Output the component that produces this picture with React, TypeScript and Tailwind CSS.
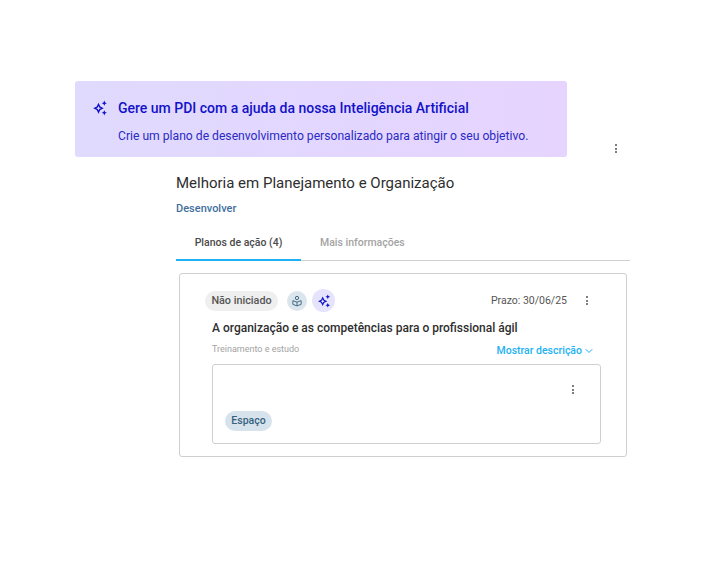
import React from 'react';
import { ChevronDown } from 'lucide-react';

const Sparkles: React.FC<{ className?: string }> = ({ className }) => (
  <svg viewBox="0 0 16 16" className={className} fill="currentColor">
    <path fillRule="evenodd" d="M6.500 2.800 8.300 6.500l3.500 1.800L8.300 10l-1.800 3.700L4.700 10 1.200 8.300l3.500-1.800zm0 3.200-.7 1.500-1.500.8 1.500.7.7 1.500.7-1.500 1.500-.7-1.500-.8z" />
    <path d="M12.300.6l.8 1.800 1.800.8-1.800.8-.8 1.800-.8-1.800-1.800-.8 1.800-.8zM12.300 10.300l.8 1.700 1.800.8-1.800.8-.8 1.800-.8-1.800-1.800-.8 1.800-.8z" />
  </svg>
);

const Kebab: React.FC<{ className?: string }> = ({ className }) => (
  <span className={`flex flex-col items-center gap-[1.500px] ${className ?? ''}`}>
    <span className="w-[2px] h-[2px] rounded-full bg-[#555]" />
    <span className="w-[2px] h-[2px] rounded-full bg-[#555]" />
    <span className="w-[2px] h-[2px] rounded-full bg-[#555]" />
  </span>
);

export default function App() {
  return (
    <div className="w-[720px] h-[565px] bg-white overflow-hidden pt-[81px] font-['Roboto',sans-serif]">
      {/* Banner */}
      <div className="flex items-end ml-[75px]">
        <div className="w-[492px] h-[76px] rounded-[3px] bg-gradient-to-r from-[#e0dafe] to-[#e6d4ff] pl-[17px] pt-[18px]">
          <div className="flex items-center gap-[10px]">
            <Sparkles className="w-4 h-4 text-[#1212c8]" />
            <span className="text-[14px] leading-[18px] font-medium text-[#1212c8]">
              Gere um PDI com a ajuda da nossa Inteligência Artificial
            </span>
          </div>
          <p className="ml-[26px] mt-[11px] text-[12.150px] leading-4 text-[#2a2ac4]">
            Crie um plano de desenvolvimento personalizado para atingir o seu objetivo.
          </p>
        </div>
        <Kebab className="ml-[48px] mb-[4px]" />
      </div>

      <div className="ml-[176px] w-[454px] mt-[16px]">
        <h1 className="text-[15px] leading-5 text-[#2e2e2e]">Melhoria em Planejamento e Organização</h1>
        <div className="mt-[8px] text-[11px] leading-4 font-medium text-[#3f6f9e]">Desenvolver</div>

        {/* Tabs */}
        <div className="flex mt-[9px] border-b border-[#cfcfcf] h-[35px]">
          <div className="w-[125px] h-[35px] border-b-2 border-[#1eb2f2] text-center pt-[9px] text-[10.500px] leading-4 font-medium text-[#4a4a4a]">
            Planos de ação (4)
          </div>
          <div className="ml-[19px] pt-[9px] text-[10.500px] leading-4 font-medium text-[#a3a3a3]">Mais informações</div>
        </div>

        {/* Card */}
        <div className="ml-[3px] mt-[12px] w-[448px] h-[184px] rounded-[3px] border border-[#cfcfcf] pl-[25px] pr-[25px] pt-[15px]">
          <div className="flex items-center h-[23px]">
            <span className="h-5 w-[73px] mt-[1px] rounded-full bg-[#efefef] text-center text-[10.800px] leading-5 font-medium text-[#555]">
              Não iniciado
            </span>
            <span className="ml-[9px] mt-[1px] w-5 h-5 rounded-full bg-[#dbe5ec] flex items-center justify-center">
              <svg viewBox="0 0 16 16" className="w-3 h-3 text-[#35607f]" fill="none" stroke="currentColor" strokeWidth="1.200">
                <circle cx="8" cy="4" r="2.200" />
                <path d="M2.500 7.500 8 9.500l5.500-2v5L8 14.500l-5.500-2zM8 9.500v5" />
              </svg>
            </span>
            <span className="ml-[5px] w-[23px] h-[23px] rounded-full bg-[#e6e4fd] flex items-center justify-center">
              <Sparkles className="w-[14px] h-[14px] text-[#1212c8]" />
            </span>
            <span className="ml-auto text-[10.500px] leading-4 text-[#555]">Prazo: 30/06/25</span>
            <Kebab className="ml-[19px] mr-[13px]" />
          </div>

          <div className="ml-[7px] mt-[7px] text-[12px] leading-[18px] font-medium text-[#2e2e2e]">
            A organização e as competências para o profissional ágil
          </div>

          <div className="flex items-center justify-between ml-[7px] mt-[4px] h-[18px] pr-[6px]">
            <span className="text-[9px] text-[#a3a3a3] mb-[1px]">Treinamento e estudo</span>
            <span className="flex items-center gap-[1px] mt-[1px] text-[10.500px] font-medium text-[#1eb2f2]">
              Mostrar descrição
              <ChevronDown className="w-3 h-3" strokeWidth={2} />
            </span>
          </div>

          {/* Inner box */}
          <div className="ml-[7px] mt-[5px] w-[389px] h-[80px] rounded-[3px] border border-[#cfcfcf] pl-[12px] pr-[26px] pt-[20px]">
            <div className="flex justify-end">
              <Kebab />
            </div>
            <span className="inline-block mt-[17px] h-5 w-[47px] rounded-full bg-[#d7e3ec] text-center text-[10.500px] leading-5 font-medium text-[#35607f]">
              Espaço
            </span>
          </div>
        </div>
      </div>
    </div>
  );
}
